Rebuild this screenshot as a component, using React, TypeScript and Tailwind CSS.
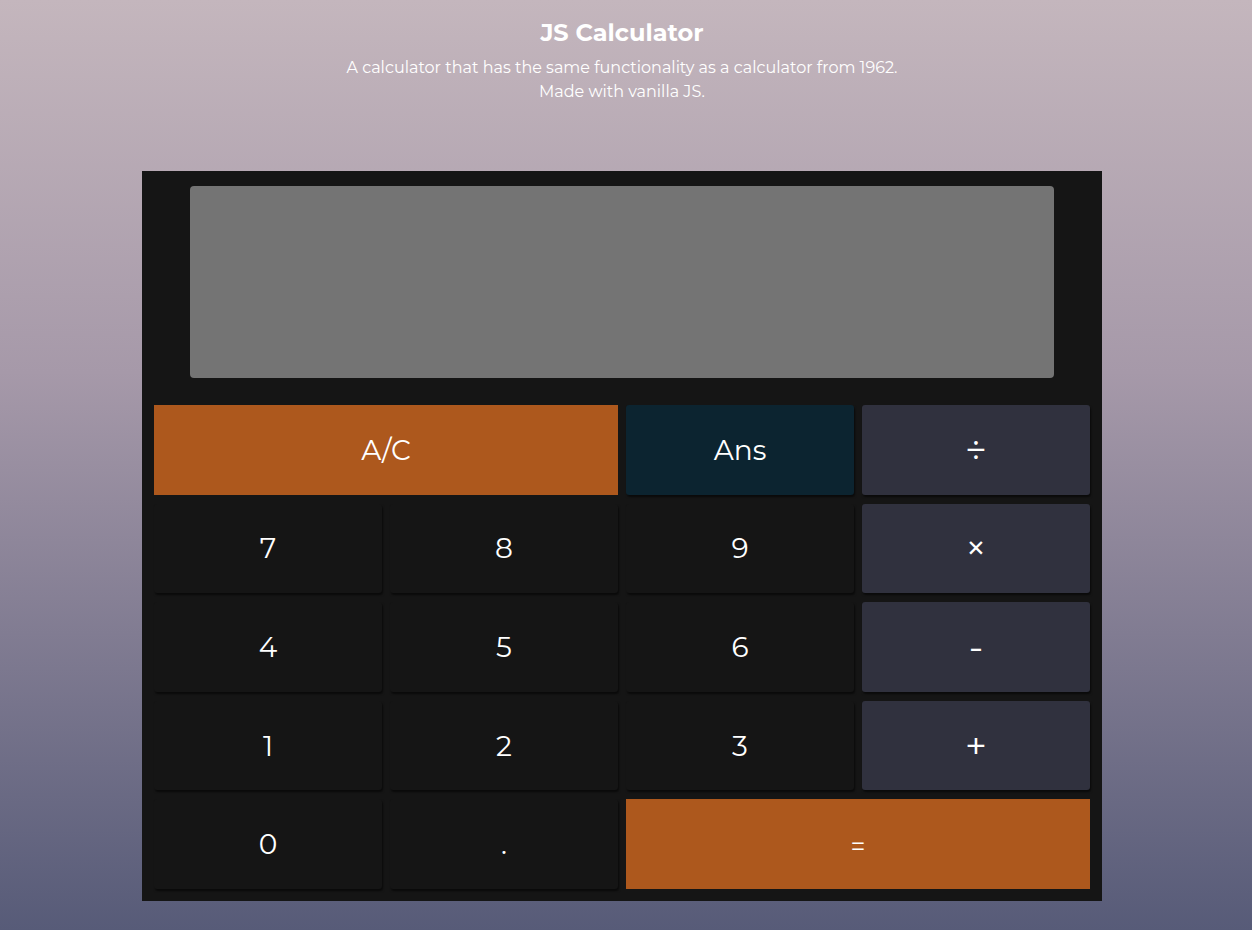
type Key = {
  label: string;
  kind: 'num' | 'op' | 'clear' | 'ans' | 'eq';
  span?: boolean;
};

const keys: Key[] = [
  { label: 'A/C', kind: 'clear', span: true },
  { label: 'Ans', kind: 'ans' },
  { label: '÷', kind: 'op' },
  { label: '7', kind: 'num' },
  { label: '8', kind: 'num' },
  { label: '9', kind: 'num' },
  { label: '×', kind: 'op' },
  { label: '4', kind: 'num' },
  { label: '5', kind: 'num' },
  { label: '6', kind: 'num' },
  { label: '-', kind: 'op' },
  { label: '1', kind: 'num' },
  { label: '2', kind: 'num' },
  { label: '3', kind: 'num' },
  { label: '+', kind: 'op' },
  { label: '0', kind: 'num' },
  { label: '.', kind: 'num' },
  { label: '=', kind: 'eq', span: true },
];

const tone: Record<Key['kind'], string> = {
  num: 'bg-[#151515] text-[28px] rounded-[3px] shadow-[1px_2px_2px_rgba(0,0,0,0.55)]',
  op: 'bg-[#30313e] text-[38px] rounded-[3px] shadow-[1px_2px_2px_rgba(0,0,0,0.55)]',
  ans: 'bg-[#0c2430] text-[28px] rounded-[3px] shadow-[1px_2px_2px_rgba(0,0,0,0.55)]',
  clear: 'bg-[#ad581d] text-[28px]',
  eq: 'bg-[#ad581d] text-[26px] pt-[3px]',
};

export default function App() {
  return (
    <div className="min-h-[930px] bg-[linear-gradient(to_bottom,#c4b6bd,#a699a9_40%,#575b78)] font-['Montserrat','Noto_Sans',sans-serif] text-white">
      <div className="w-[1244px]">
        <header className="pt-[18px] text-center">
          <h1 className="text-[24px] font-bold leading-[30px]">JS Calculator</h1>
          <p className="mt-[8px] text-[16px] leading-[24px]">
            A calculator that has the same functionality as a calculator from 1962.
            <br />
            Made with vanilla JS.
          </p>
        </header>

        <div className="mx-auto mt-[67px] w-[960px] bg-[#151515] px-[12px] pb-[12px] pt-[15px]">
          <div className="mx-auto h-[192px] w-[864px] rounded-[4px] bg-[#747474]" />
          <div className="mt-[27px] grid h-[484px] grid-cols-4 grid-rows-5 gap-x-[8px] gap-y-[9px]">
            {keys.map((k) => (
              <button
                key={k.label}
                className={`flex items-center justify-center leading-none ${k.span ? 'col-span-2' : ''} ${tone[k.kind]}`}
              >
                {k.label}
              </button>
            ))}
          </div>
        </div>
      </div>
    </div>
  );
}
